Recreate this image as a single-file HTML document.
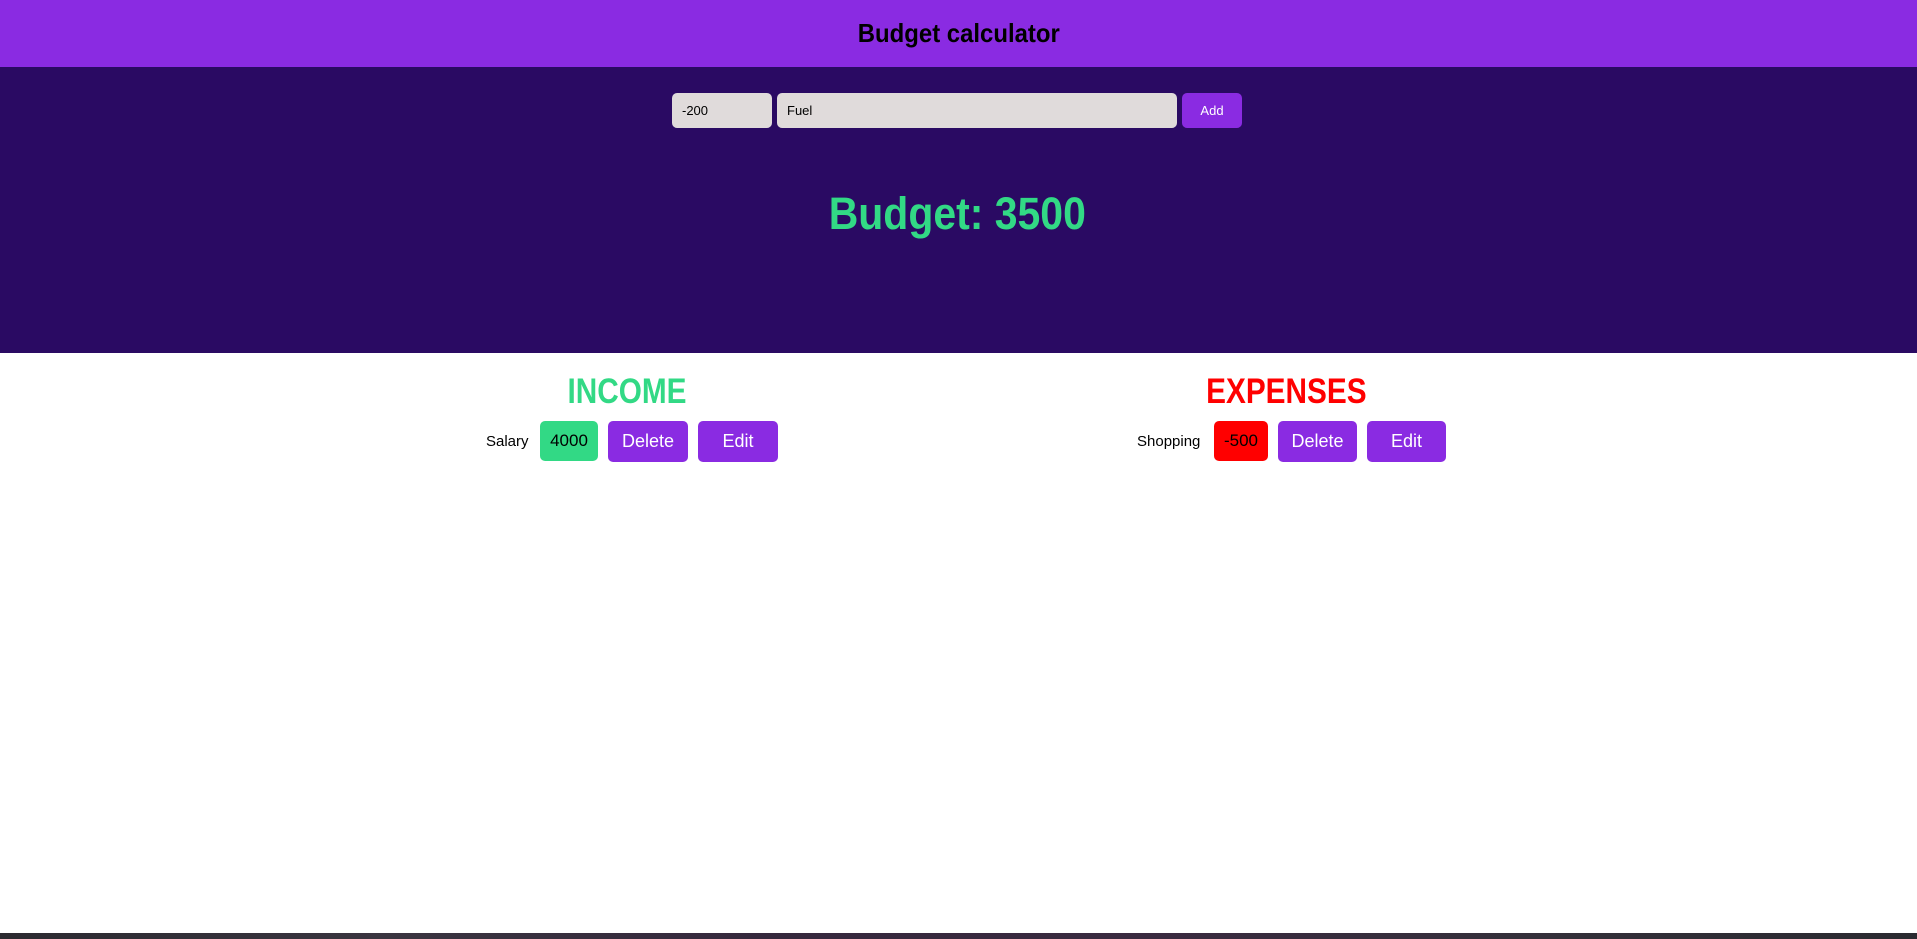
<!DOCTYPE html>
<html><head><meta charset="utf-8"><style>
*{margin:0;padding:0;box-sizing:border-box}
body{width:1917px;height:939px;position:relative;overflow:hidden;background:#fff;font-family:"Liberation Sans",Arial,sans-serif}
.a{position:absolute}
.hdr{left:0;top:0;width:1917px;height:67px;background:#8a2be2}
.dark{left:0;top:67px;width:1917px;height:286px;background:#2a0a63}
.t{display:flex;align-items:center;justify-content:center}
.inp{background:#e0dbdb;border-radius:5px;font-size:13px;color:#000;display:flex;align-items:center;padding-left:10px}
.btn{background:#8a2be2;color:#fff;border-radius:5px;font-size:18px}
.sq{display:inline-block;transform:scaleX(.85)}
</style></head><body>
<div class="a hdr t"><span style="font-weight:bold;font-size:26px;color:#000;display:inline-block;transform:scaleX(.92)">Budget calculator</span></div>
<div class="a dark"></div>
<div class="a inp" style="left:672px;top:93px;width:100px;height:35px">-200</div>
<div class="a inp" style="left:777px;top:93px;width:400px;height:35px">Fuel</div>
<div class="a btn t" style="left:1182px;top:93px;width:60px;height:35px;font-size:13px">Add</div>
<div class="a t" style="left:700px;top:188px;width:515px;height:52px"><span style="font-weight:bold;font-size:45px;color:#32d985;display:inline-block;transform:scaleX(.91)">Budget: 3500</span></div>
<div class="a t" style="left:527px;top:372px;width:200px;height:40px"><span class="sq" style="font-weight:bold;font-size:35px;color:#32d985">INCOME</span></div>
<div class="a t" style="left:1136px;top:372px;width:300px;height:40px"><span class="sq" style="font-weight:bold;font-size:35px;color:#ff0000">EXPENSES</span></div>
<div class="a" style="left:486px;top:433px;font-size:15px;color:#000">Salary</div>
<div class="a t" style="left:540px;top:421px;width:58px;height:40px;background:#32d985;border-radius:5px;font-size:17px;color:#000">4000</div>
<div class="a btn t" style="left:608px;top:421px;width:80px;height:41px">Delete</div>
<div class="a btn t" style="left:698px;top:421px;width:80px;height:41px">Edit</div>
<div class="a" style="left:1137px;top:433px;font-size:15px;color:#000">Shopping</div>
<div class="a t" style="left:1214px;top:421px;width:54px;height:40px;background:#ff0000;border-radius:5px;font-size:17px;color:#000">-500</div>
<div class="a btn t" style="left:1278px;top:421px;width:79px;height:41px">Delete</div>
<div class="a btn t" style="left:1367px;top:421px;width:79px;height:41px">Edit</div>
<div class="a" style="left:0;top:933px;width:1917px;height:6px;background:linear-gradient(90deg,#2b2a30,#3a3540 20%,#35283d 40%,#3a2a40 60%,#34303a 80%,#2a2a30)"></div>
</body></html>
